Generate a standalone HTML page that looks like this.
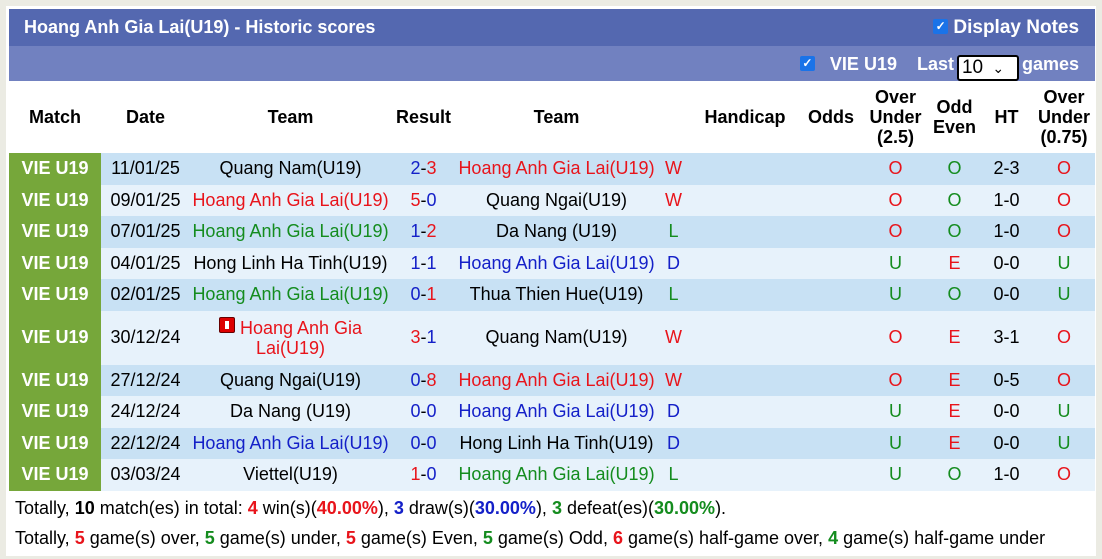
<!DOCTYPE html>
<html><head><meta charset="utf-8"><style>
body{margin:0;background:#ebebe3;font-family:"Liberation Sans",Arial,sans-serif;}
#w{position:absolute;left:6px;top:6px;width:1090px;height:550px;background:#fff;}
table{position:absolute;left:3px;top:3px;border-collapse:collapse;width:1086px;table-layout:fixed;}
td,th{padding:0;text-align:center;font-size:18px;white-space:nowrap;}
.t1 td{background:#5468b0;color:#fff;font-weight:bold;height:37px;font-size:18px;}
.t2 td{background:#7181c0;color:#fff;font-weight:bold;height:35px;position:relative}
.hd th{height:72px;font-weight:bold;color:#000;line-height:20px;}
.r td{height:31.5px;}
.a td{background:#c8e1f4;}
.b td{background:#e7f2fb;}
td.m{background:#76a73a!important;color:#fff;font-weight:bold;font-size:18px;}
.red{color:#e8141b}.blu{color:#1420c8}.grn{color:#148c1e}
.s td{text-align:left;padding-left:6px;height:30px;font-size:18px;}
.cb{display:inline-block;width:15px;height:15px;background:#1a73e8;border-radius:2px;color:#fff;font-size:12px;line-height:15px;text-align:center;vertical-align:3px;}
.sel{display:inline-block;border:2px solid #000;border-radius:3px;background:#fff;color:#000;font-weight:normal;padding:0 3px;width:52px;text-align:left;height:22px;line-height:22px;font-size:19px;margin:0 3px 0 3px;vertical-align:-3px}
.ic{display:inline-block;width:14px;height:14px;background:#d00;border:1px solid #600;border-radius:2px;vertical-align:1px;position:relative}
.ic:after{content:"";position:absolute;left:5px;top:3px;width:4px;height:8px;background:#fff}
</style></head><body><div id="w">
<table>
<colgroup><col style="width:92px"><col style="width:89px"><col style="width:201px"><col style="width:65px"><col style="width:201px"><col style="width:33px"><col style="width:110px"><col style="width:62px"><col style="width:67px"><col style="width:51px"><col style="width:53px"><col style="width:62px"></colgroup>
<tr class="t1"><td colspan="12" style="text-align:left;padding-left:15px;position:relative">Hoang Anh Gia Lai(U19) - Historic scores<span style="position:absolute;right:16px;top:8px;font-size:19px"><span class="cb">✓</span> Display Notes</span></td></tr>
<tr class="t2"><td colspan="12"><span style="position:absolute;right:16px;top:7px;line-height:22px;font-size:18px"><span class="cb">✓</span> &nbsp; VIE U19 &nbsp; &nbsp;Last<span class="sel">10 <span style="font-size:14px;position:relative;left:4px">⌄</span></span>games</span></td></tr>
<tr class="hd"><th>Match</th><th>Date</th><th>Team</th><th>Result</th><th>Team</th><th></th><th>Handicap</th><th>Odds</th><th>Over<br>Under<br>(2.5)</th><th>Odd<br>Even</th><th>HT</th><th>Over<br>Under<br>(0.75)</th></tr>
<tr class="r a"><td class="m">VIE U19</td><td>11/01/25</td><td>Quang Nam(U19)</td><td><span class="blu">2</span>-<span class="red">3</span></td><td class="red">Hoang Anh Gia Lai(U19)</td><td class="red">W</td><td></td><td></td><td class="red">O</td><td class="grn">O</td><td>2-3</td><td class="red">O</td></tr>
<tr class="r b"><td class="m">VIE U19</td><td>09/01/25</td><td class="red">Hoang Anh Gia Lai(U19)</td><td><span class="red">5</span>-<span class="blu">0</span></td><td>Quang Ngai(U19)</td><td class="red">W</td><td></td><td></td><td class="red">O</td><td class="grn">O</td><td>1-0</td><td class="red">O</td></tr>
<tr class="r a"><td class="m">VIE U19</td><td>07/01/25</td><td class="grn">Hoang Anh Gia Lai(U19)</td><td><span class="blu">1</span>-<span class="red">2</span></td><td>Da Nang (U19)</td><td class="grn">L</td><td></td><td></td><td class="red">O</td><td class="grn">O</td><td>1-0</td><td class="red">O</td></tr>
<tr class="r b"><td class="m">VIE U19</td><td>04/01/25</td><td>Hong Linh Ha Tinh(U19)</td><td><span class="blu">1</span>-<span class="blu">1</span></td><td class="blu">Hoang Anh Gia Lai(U19)</td><td class="blu">D</td><td></td><td></td><td class="grn">U</td><td class="red">E</td><td>0-0</td><td class="grn">U</td></tr>
<tr class="r a"><td class="m">VIE U19</td><td>02/01/25</td><td class="grn">Hoang Anh Gia Lai(U19)</td><td><span class="blu">0</span>-<span class="red">1</span></td><td>Thua Thien Hue(U19)</td><td class="grn">L</td><td></td><td></td><td class="grn">U</td><td class="grn">O</td><td>0-0</td><td class="grn">U</td></tr>
<tr class="b"><td class="m" style="height:54px">VIE U19</td><td>30/12/24</td><td class="red" style="line-height:20px"><span class="ic"></span> Hoang Anh Gia<br>Lai(U19)</td><td><span class="red">3</span>-<span class="blu">1</span></td><td>Quang Nam(U19)</td><td class="red">W</td><td></td><td></td><td class="red">O</td><td class="red">E</td><td>3-1</td><td class="red">O</td></tr>
<tr class="r a"><td class="m">VIE U19</td><td>27/12/24</td><td>Quang Ngai(U19)</td><td><span class="blu">0</span>-<span class="red">8</span></td><td class="red">Hoang Anh Gia Lai(U19)</td><td class="red">W</td><td></td><td></td><td class="red">O</td><td class="red">E</td><td>0-5</td><td class="red">O</td></tr>
<tr class="r b"><td class="m">VIE U19</td><td>24/12/24</td><td>Da Nang (U19)</td><td><span class="blu">0</span>-<span class="blu">0</span></td><td class="blu">Hoang Anh Gia Lai(U19)</td><td class="blu">D</td><td></td><td></td><td class="grn">U</td><td class="red">E</td><td>0-0</td><td class="grn">U</td></tr>
<tr class="r a"><td class="m">VIE U19</td><td>22/12/24</td><td class="blu">Hoang Anh Gia Lai(U19)</td><td><span class="blu">0</span>-<span class="blu">0</span></td><td>Hong Linh Ha Tinh(U19)</td><td class="blu">D</td><td></td><td></td><td class="grn">U</td><td class="red">E</td><td>0-0</td><td class="grn">U</td></tr>
<tr class="r b"><td class="m">VIE U19</td><td>03/03/24</td><td>Viettel(U19)</td><td><span class="red">1</span>-<span class="blu">0</span></td><td class="grn">Hoang Anh Gia Lai(U19)</td><td class="grn">L</td><td></td><td></td><td class="grn">U</td><td class="grn">O</td><td>1-0</td><td class="red">O</td></tr>
<tr class="s"><td colspan="12" style="padding-top:3px">Totally, <b>10</b> match(es) in total: <b class="red">4</b> win(s)(<b class="red">40.00%</b>), <b class="blu">3</b> draw(s)(<b class="blu">30.00%</b>), <b class="grn">3</b> defeat(es)(<b class="grn">30.00%</b>).</td></tr>
<tr class="s"><td colspan="12">Totally, <b class="red">5</b> game(s) over, <b class="grn">5</b> game(s) under, <b class="red">5</b> game(s) Even, <b class="grn">5</b> game(s) Odd, <b class="red">6</b> game(s) half-game over, <b class="grn">4</b> game(s) half-game under</td></tr>
</table></div></body></html>
